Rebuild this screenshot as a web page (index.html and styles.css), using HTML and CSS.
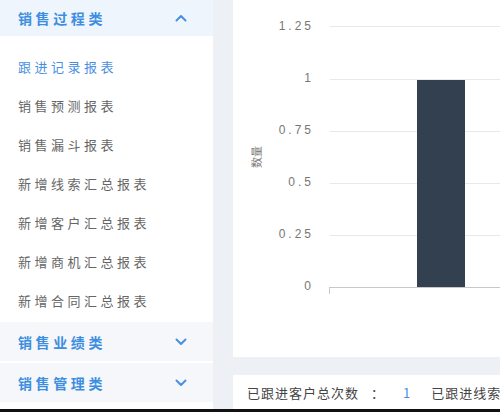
FILE: index.html
```html
<!DOCTYPE html>
<html lang="zh">
<head>
<meta charset="utf-8">
<link rel="stylesheet" href="styles.css">
</head>
<body>
<div class="page">
  <aside class="sidebar">
    <div class="group-head open">
      <span>销售过程类</span>
      <svg class="chev" width="12" height="8" viewBox="0 0 12 8"><path d="M1.5 6.5 L6 2 L10.5 6.5" fill="none" stroke="#4a90e2" stroke-width="2" stroke-linecap="round" stroke-linejoin="round"/></svg>
    </div>
    <ul class="menu">
      <li class="active">跟进记录报表</li>
      <li>销售预测报表</li>
      <li>销售漏斗报表</li>
      <li>新增线索汇总报表</li>
      <li>新增客户汇总报表</li>
      <li>新增商机汇总报表</li>
      <li>新增合同汇总报表</li>
    </ul>
    <div class="group-head closed">
      <span>销售业绩类</span>
      <svg class="chev" width="12" height="8" viewBox="0 0 12 8"><path d="M1.5 1.5 L6 6 L10.5 1.5" fill="none" stroke="#4a90e2" stroke-width="2" stroke-linecap="round" stroke-linejoin="round"/></svg>
    </div>
    <div class="group-head closed">
      <span>销售管理类</span>
      <svg class="chev" width="12" height="8" viewBox="0 0 12 8"><path d="M1.5 1.5 L6 6 L10.5 1.5" fill="none" stroke="#4a90e2" stroke-width="2" stroke-linecap="round" stroke-linejoin="round"/></svg>
    </div>
  </aside>
  <main class="main">
    <section class="card chart-card">
      <svg class="chart" width="267" height="357" viewBox="0 0 267 357">
        <g class="grid" stroke="#e8e8e8" stroke-width="1">
          <line x1="97" y1="26.5" x2="267" y2="26.5"/>
          <line x1="97" y1="79.5" x2="267" y2="79.5"/>
          <line x1="97" y1="131.5" x2="267" y2="131.5"/>
          <line x1="97" y1="183.5" x2="267" y2="183.5"/>
          <line x1="97" y1="235.5" x2="267" y2="235.5"/>
        </g>
        <rect x="184" y="80" width="48" height="207" fill="#334050"/>
        <line x1="97" y1="287.5" x2="267" y2="287.5" stroke="#c8c8c8" stroke-width="1"/>
        <line x1="96.5" y1="287" x2="96.5" y2="294" stroke="#c8c8c8" stroke-width="1"/>
        <g class="ylab">
          <text x="81" y="30">1.25</text>
          <text x="81" y="82">1</text>
          <text x="81" y="134">0.75</text>
          <text x="81" y="186">0.5</text>
          <text x="81" y="238">0.25</text>
          <text x="81" y="290">0</text>
        </g>
        <text class="yname" transform="translate(28 157) rotate(-90)">数量</text>
      </svg>
    </section>
    <section class="card stats-card">
      <span class="stat">已跟进客户总次数<span class="colon">：</span><span class="num">1</span></span>
      <span class="stat">已跟进线索总次数<span class="colon">：</span><span class="num">0</span></span>
    </section>
  </main>
</div>
<div class="bottom-bar"></div>
</body>
</html>
```

FILE: styles.css
```css
html, body {
  margin: 0;
  padding: 0;
  width: 500px;
  height: 412px;
  overflow: hidden;
  background: #edf0f5;
  font-family: "Noto Sans CJK SC", "Liberation Sans", sans-serif;
}
.page {
  display: flex;
  height: 409px;
  overflow: hidden;
}
.sidebar {
  width: 213px;
  flex: none;
  background: #fff;
  display: flex;
  flex-direction: column;
}
.group-head {
  display: flex;
  align-items: center;
  justify-content: space-between;
  padding: 0 26px 0 18px;
  font-size: 14px;
  font-weight: bold;
  letter-spacing: 3.6px;
  color: #3d8ee0;
}
.group-head.open {
  height: 36px;
  background: #eef5fd;
}
.group-head.closed {
  height: 39px;
  background: #f5f7fa;
  margin-bottom: 2px;
}
.menu {
  list-style: none;
  margin: 0;
  padding: 11px 0 2px;
}
.menu li {
  height: 39px;
  line-height: 39px;
  padding-left: 18px;
  font-size: 13px;
  letter-spacing: 3.5px;
  color: #666;
}
.menu li.active {
  color: #4a90e2;
}
.main {
  flex: 1;
  padding-left: 20px;
  display: flex;
  flex-direction: column;
  gap: 18px;
  min-width: 0;
}
.card {
  background: #fff;
}
.chart-card {
  height: 357px;
  flex: none;
}
.chart {
  display: block;
}
.ylab text {
  font-family: "Liberation Sans", sans-serif;
  font-size: 12px;
  letter-spacing: 3px;
  fill: #777;
  text-anchor: end;
}
.yname {
  font-size: 11px;
  fill: #777;
  text-anchor: middle;
}
.stats-card {
  height: 40px;
  display: flex;
  align-items: center;
  padding-left: 14px;
  white-space: nowrap;
  overflow: hidden;
  font-size: 13px;
  letter-spacing: 1px;
  color: #444;
}
.stat {
  margin-right: 20px;
}
.colon {
  margin: 0 18px 0 12px;
}
.num {
  color: #4a90e2;
}
.bottom-bar {
  height: 3px;
  background: #111;
}
```
